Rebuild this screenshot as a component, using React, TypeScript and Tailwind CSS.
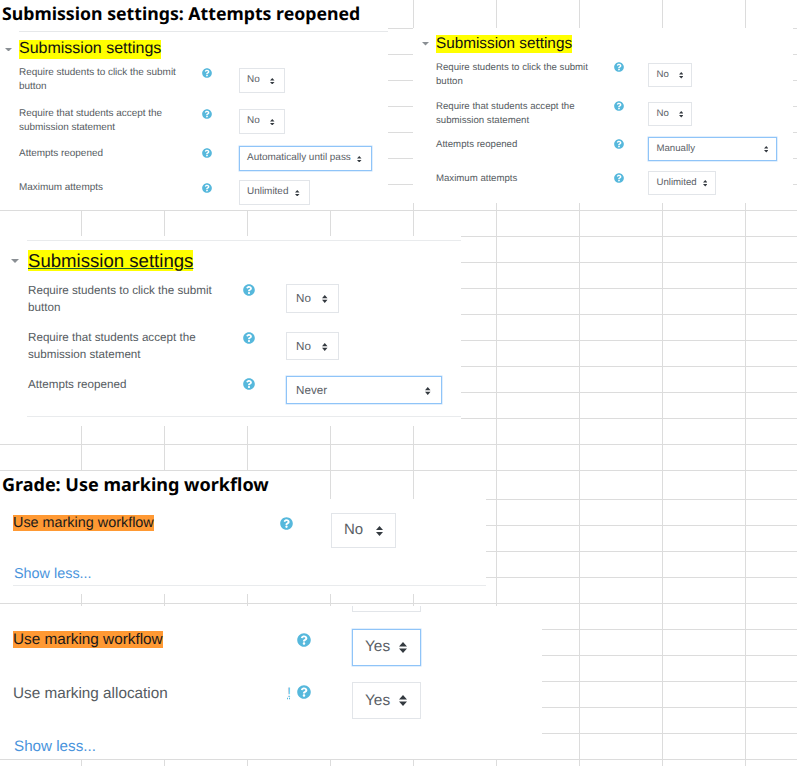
import { FaQuestionCircle } from "react-icons/fa";

const ROWS = [29, ...Array(17).fill(26), 29, ...Array(11).fill(26)];

// spreadsheet the screenshots were pasted on
function SheetGrid() {
  return (
    <div className="w-[797px]">
      {ROWS.map((h, r) => (
        <div key={r} className="flex border-b border-[#dcdcdc]" style={{ height: h }}>
          <div className="h-full w-[82px] shrink-0 border-r border-[#dcdcdc]" />
          {Array.from({ length: 9 }).map((_, c) => (
            <div key={c} className="h-full w-[83px] shrink-0 border-r border-[#dcdcdc]" />
          ))}
        </div>
      ))}
    </div>
  );
}

function Caret({ className }: { className: string }) {
  return (
    <svg viewBox="0 0 8 4" className={className}>
      <path d="M0 0h8L4 4z" fill="#8a8f94" />
    </svg>
  );
}

function Arrows({ className }: { className: string }) {
  return (
    <svg viewBox="0 0 4 5" preserveAspectRatio="none" className={className}>
      <path d="M2 0L0 2h4zm0 5L0 3h4z" fill="#343a40" />
    </svg>
  );
}

function Select({
  value,
  focused = false,
  className,
  arrowCls = "h-[6.5px] w-[4.5px]",
}: {
  value: string;
  focused?: boolean;
  className: string;
  arrowCls?: string;
}) {
  return (
    <div
      className={`flex shrink-0 items-center justify-between whitespace-nowrap border-[1.5px] bg-white text-[#5a6066] ${
        focused ? "border-[#8fc4f8] shadow-[0_0_0_0.5px_#c4e0fb]" : "border-[#e2e5e9]"
      } ${className}`}
    >
      <span>{value}</span>
      <Arrows className={arrowCls} />
    </div>
  );
}

function Row({
  label,
  value,
  focused,
  rowCls,
  labelCls,
  helpCls,
  selCls,
  arrowCls,
}: {
  label: string;
  value: string;
  focused?: boolean;
  rowCls: string;
  labelCls: string;
  helpCls: string;
  selCls: string;
  arrowCls?: string;
}) {
  return (
    <div className={`flex items-start ${rowCls}`}>
      <div className={`shrink-0 text-[#555b61] ${labelCls}`}>{label}</div>
      <FaQuestionCircle className={`shrink-0 text-[#56b8dc] ${helpCls}`} />
      <Select value={value} focused={focused} className={selCls} arrowCls={arrowCls} />
    </div>
  );
}

function Heading({ caretCls, textCls, rowCls }: { caretCls: string; textCls: string; rowCls: string }) {
  return (
    <div className={`flex items-center ${rowCls}`}>
      <Caret className={caretCls} />
      <span className={`bg-[#ffff00] text-[#111] ${textCls}`}>Submission settings</span>
    </div>
  );
}

const sansTitle = "font-['Noto_Sans',sans-serif] font-bold text-black";

export default function App() {
  const a = {
    lab: "w-[183px] text-[9.95px] leading-[14.7px]",
    help: "size-[10px]",
  };
  const b = {
    lab: "w-[178px] text-[9.65px] leading-[14.3px]",
    help: "size-[10px]",
  };
  const c = {
    lab: "w-[215px] text-[11.65px] leading-[17.4px]",
    help: "size-[12px]",
  };
  const selA = "ml-[26.5px] h-[25px] pl-[7.5px] pr-[9px] pt-[1.5px] text-[9.95px]";
  const selB = "ml-[24px] h-[24px] pl-[7.5px] pr-[8px] pt-[1px] text-[9.65px]";
  const selC = "ml-[30.5px] h-[28px] pl-[9.5px] pr-[10px] pt-[1px] text-[11.65px]";
  const arrowC = "h-[8px] w-[5.5px]";
  const arrowD = "h-[10px] w-[7px]";
  const arrowE = "h-[11px] w-[8px]";

  return (
    <div className="relative h-[766px] w-[797px] overflow-hidden bg-white font-['Liberation_Sans',Arial,sans-serif] [text-rendering:geometricPrecision]">
      <SheetGrid />

      {/* top left: automatically until pass */}
      <div className="absolute left-0 top-0 h-[210px] w-[388px] bg-white">
        <div className={`h-[31px] pl-[2px] pt-[1px] text-[17.7px] leading-[27px] ${sansTitle}`}>
          Submission settings: Attempts reopened
        </div>
        <div className="ml-[19px] border-t border-[#e6e8ea]" />
        <Heading
          rowCls="mt-[8px] pl-[5px]"
          caretCls="mr-[7px] h-[3.5px] w-[7px]"
          textCls="text-[16px] leading-[18.5px]"
        />
        <div className="mt-[9px] pl-[19px]">
          <Row
            label="Require students to click the submit button"
            value="No"
            rowCls="h-[41px]"
            labelCls={`${a.lab} mt-[-2px]`}
            helpCls={a.help}
            selCls={`${selA} w-[46px]`}
          />
          <Row
            label="Require that students accept the submission statement"
            value="No"
            rowCls="h-[37px]"
            labelCls={`${a.lab} mt-[-2px]`}
            helpCls={a.help}
            selCls={`${selA} w-[46px]`}
          />
          <Row
            label="Attempts reopened"
            value="Automatically until pass"
            focused
            rowCls="h-[34px]"
            labelCls={`${a.lab} mt-[1px]`}
            helpCls={`${a.help} mt-[2px]`}
            selCls={`${selA} w-[133px]`}
          />
          <Row
            label="Maximum attempts"
            value="Unlimited"
            rowCls="h-[30px]"
            labelCls={`${a.lab} mt-[1px]`}
            helpCls={`${a.help} mt-[3px]`}
            selCls={`${selA} w-[71px]`}
          />
        </div>
      </div>

      {/* top right: manually */}
      <div className="absolute left-[413px] top-[28px] h-[175px] w-[380px] bg-white">
        <Heading
          rowCls="pl-[9px] pt-[7px]"
          caretCls="mr-[7px] h-[3.5px] w-[7px]"
          textCls="text-[15.3px] leading-[18px]"
        />
        <div className="mt-[10px] pl-[23px]">
          <Row
            label="Require students to click the submit button"
            value="No"
            rowCls="h-[39px]"
            labelCls={`${b.lab} mt-[-2px]`}
            helpCls={`${b.help} mt-[-1px]`}
            selCls={`${selB} w-[44px]`}
          />
          <Row
            label="Require that students accept the submission statement"
            value="No"
            rowCls="h-[35px]"
            labelCls={`${b.lab} mt-[-2px]`}
            helpCls={`${b.help} mt-[-1px]`}
            selCls={`${selB} w-[44px]`}
          />
          <Row
            label="Attempts reopened"
            value="Manually"
            focused
            rowCls="h-[34px]"
            labelCls={`${b.lab} mt-[1px]`}
            helpCls={`${b.help} mt-[2px]`}
            selCls={`${selB} w-[129px]`}
          />
          <Row
            label="Maximum attempts"
            value="Unlimited"
            rowCls="h-[30px]"
            labelCls={`${b.lab} mt-[1px]`}
            helpCls={`${b.help} mt-[2px]`}
            selCls={`${selB} w-[68px]`}
          />
        </div>
      </div>

      {/* middle: never */}
      <div className="absolute left-0 top-[236px] h-[190px] w-[461px] bg-white">
        <div className="ml-[27px] mt-[4px] border-t-[1.5px] border-[#e9ebed]" />
        <Heading
          rowCls="mt-[9px] pl-[11px]"
          caretCls="mr-[9px] h-[4px] w-[8px]"
          textCls="text-[18.6px] leading-[21px] underline decoration-[#1a5a3a]"
        />
        <div className="mt-[13px] pl-[28px]">
          <Row
            label="Require students to click the submit button"
            value="No"
            rowCls="h-[48px]"
            labelCls={`${c.lab} mt-[-2px]`}
            helpCls={c.help}
            selCls={`${selC} !h-[29px] w-[53px]`}
            arrowCls={arrowC}
          />
          <Row
            label="Require that students accept the submission statement"
            value="No"
            rowCls="h-[44px]"
            labelCls={`${c.lab} mt-[-3px]`}
            helpCls={c.help}
            selCls={`${selC} w-[53px]`}
            arrowCls={arrowC}
          />
          <Row
            label="Attempts reopened"
            value="Never"
            focused
            rowCls="h-[40px]"
            labelCls={c.lab}
            helpCls={`${c.help} mt-[2px]`}
            selCls={`${selC} w-[156px]`}
            arrowCls={arrowC}
          />
        </div>
        <div className="ml-[27px] border-t-[1.5px] border-[#e9ebed]" />
      </div>

      {/* grade title */}
      <div className={`absolute left-0 top-[471px] h-[28px] w-[329px] bg-white pl-[2px] pt-[1px] text-[18px] leading-[27px] ${sansTitle}`}>
        Grade: Use marking workflow
      </div>

      {/* workflow off */}
      <div className="absolute left-0 top-[499px] h-[95px] w-[486px] bg-white pl-[13px]">
        <div className="mt-[14px] flex items-start">
          <div className="mt-[2px] w-[267px] shrink-0">
            <div className="w-fit bg-[#ff9933] text-[14.4px] leading-[16px] text-[#1a1a1a]">Use marking workflow</div>
          </div>
          <FaQuestionCircle className="mt-[4px] size-[13px] shrink-0 text-[#56b8dc]" />
          <Select value="No" className="ml-[38px] h-[35px] w-[65px] pl-[12px] pr-[12px] text-[15px]" arrowCls={arrowD} />
        </div>
        <div className="mt-[18px] pl-[1px] text-[14.4px] leading-[17px] text-[#4a94dc]">Show less...</div>
        <div className="mt-[2px] border-t-[1.5px] border-[#e9ebed]" />
      </div>

      {/* workflow on */}
      <div className="absolute left-0 top-[606px] h-[153px] w-[542px] bg-white pl-[13px]">
        <div className="ml-[339px] h-[6px] w-[69px] border-x-[1.5px] border-b-[1.5px] border-[#e2e5e9]" />
        <div className="mt-[17px] flex items-start">
          <div className="mt-[2px] w-[284px] shrink-0">
            <div className="w-fit bg-[#ff9933] text-[15.3px] leading-[17px] text-[#1a1a1a]">Use marking workflow</div>
          </div>
          <FaQuestionCircle className="mt-[4px] size-[14px] shrink-0 text-[#56b8dc]" />
          <Select value="Yes" focused className="ml-[41px] h-[37px] w-[69px] pb-[1px] pl-[12px] pr-[13px] text-[15.4px]" arrowCls={arrowE} />
        </div>
        <div className="mt-[16px] flex items-start">
          <div className="mt-[3px] w-[268px] shrink-0 text-[15.3px] leading-[17px] text-[#555b61]">Use marking allocation</div>
          <span className="mt-[2px] w-[16px] shrink-0 pl-[6px] text-[14px] leading-[17px] text-[#56b8dc] underline decoration-dotted">!</span>
          <FaQuestionCircle className="mt-[3px] size-[14px] shrink-0 text-[#56b8dc]" />
          <Select value="Yes" className="ml-[41px] h-[37px] w-[69px] pl-[12px] pr-[13px] text-[15.4px]" arrowCls={arrowE} />
        </div>
        <div className="mt-[19px] pl-[1px] text-[15.2px] leading-[18px] text-[#4a94dc]">Show less...</div>
      </div>
    </div>
  );
}
